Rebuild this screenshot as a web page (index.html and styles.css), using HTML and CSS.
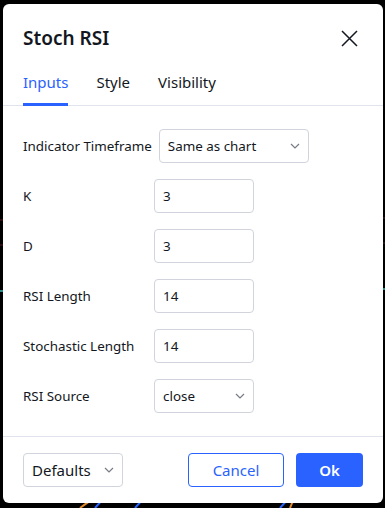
FILE: index.html
```html
<!DOCTYPE html>
<html lang="en">
<head>
<meta charset="UTF-8">
<meta name="viewport" content="width=device-width, initial-scale=1.0">
<title>Stoch RSI</title>
<link rel="stylesheet" href="styles.css">
</head>
<body>
<svg class="chart" width="385" height="508" viewBox="0 0 385 508">
    <path d="M0 220 L385 218" stroke="#5a1a24" stroke-width="1" fill="none"/>
    <path d="M0 245 L385 243" stroke="#5a1a24" stroke-width="1" fill="none"/>
    <path d="M0 291 L385 289" stroke="#2a8c86" stroke-width="2" fill="none"/>
    <path d="M80 508 Q90 500 100 495" stroke="#e08a2a" stroke-width="2" fill="none"/>
    <path d="M95 508 Q100 502 105 498" stroke="#2962ff" stroke-width="2" fill="none"/>
    <path d="M135 508 Q140 502 145 498" stroke="#2962ff" stroke-width="2" fill="none"/>
    <path d="M280 508 Q285 502 290 498" stroke="#2962ff" stroke-width="2" fill="none"/>
    <path d="M290 508 Q292 503 294 499" stroke="#e08a2a" stroke-width="2" fill="none"/>
</svg>

<div class="dialog">
    <div class="header">
        <h2 class="title">Stoch RSI</h2>
        <svg class="close" width="17" height="17" viewBox="0 0 17 17">
            <path d="M1 1 L16 16 M16 1 L1 16" stroke="#131722" stroke-width="1.5" fill="none"/>
        </svg>
    </div>

    <div class="tabs">
        <span class="tab active">Inputs</span>
        <span class="tab">Style</span>
        <span class="tab">Visibility</span>
    </div>

    <div class="content">
        <div class="row">
            <label>Indicator Timeframe</label>
            <div class="field select wide">
                <span>Same as chart</span>
                <svg width="10" height="6" viewBox="0 0 10 6"><path d="M1 1 L5 5 L9 1" stroke="#787b86" stroke-width="1.2" fill="none"/></svg>
            </div>
        </div>
        <div class="row">
            <label>K</label>
            <div class="field">3</div>
        </div>
        <div class="row">
            <label>D</label>
            <div class="field">3</div>
        </div>
        <div class="row">
            <label>RSI Length</label>
            <div class="field">14</div>
        </div>
        <div class="row">
            <label>Stochastic Length</label>
            <div class="field">14</div>
        </div>
        <div class="row">
            <label>RSI Source</label>
            <div class="field select">
                <span>close</span>
                <svg width="10" height="6" viewBox="0 0 10 6"><path d="M1 1 L5 5 L9 1" stroke="#787b86" stroke-width="1.2" fill="none"/></svg>
            </div>
        </div>
    </div>

    <div class="footer">
        <div class="field select defaults">
            <span>Defaults</span>
            <svg width="10" height="6" viewBox="0 0 10 6"><path d="M1 1 L5 5 L9 1" stroke="#787b86" stroke-width="1.2" fill="none"/></svg>
        </div>
        <div class="buttons">
            <button class="btn cancel">Cancel</button>
            <button class="btn ok">Ok</button>
        </div>
    </div>
</div>
</body>
</html>
```

FILE: styles.css
```css
html, body {
    margin: 0;
    height: 100%;
}
body {
    background: #000;
    font-family: "Noto Sans", sans-serif;
    color: #131722;
    padding: 4px 2px 5px 3px;
    box-sizing: border-box;
    position: relative;
}
.chart {
    position: absolute;
    left: 0;
    top: 0;
}
.dialog {
    position: relative;
    background: #fff;
    border-radius: 6px;
    height: 100%;
    display: flex;
    flex-direction: column;
}
.header {
    display: flex;
    align-items: center;
    justify-content: space-between;
    padding: 0 25px 0 20px;
    height: 68px;
}
.title {
    margin: 0;
    font-size: 19px;
    font-weight: 600;
}
.close {
    display: block;
}
.tabs {
    display: flex;
    gap: 28px;
    padding: 0 20px;
    border-bottom: 1px solid #e0e3eb;
}
.tab {
    font-size: 15px;
    padding: 0 0 11px;
    border-bottom: 3px solid transparent;
    margin-bottom: -1px;
}
.tab.active {
    color: #2962ff;
    border-bottom-color: #2962ff;
}
.content {
    flex: 1;
    padding: 23px 20px 0;
    display: flex;
    flex-direction: column;
    gap: 16px;
}
.row {
    display: flex;
    align-items: center;
}
.row label {
    font-size: 13.4px;
    min-width: 124px;
    margin-right: 7px;
}
.field {
    box-sizing: border-box;
    width: 100px;
    height: 34px;
    border: 1px solid #d1d4dc;
    border-radius: 4px;
    padding: 0 8px;
    font-size: 13.4px;
    display: flex;
    align-items: center;
}
.select {
    justify-content: space-between;
}
.wide {
    width: 150px;
}
.footer {
    display: flex;
    justify-content: space-between;
    align-items: center;
    padding: 16px 20px;
    border-top: 1px solid #e0e3eb;
}
.defaults {
    font-size: 15px;
}
.buttons {
    display: flex;
    gap: 12px;
}
.btn {
    height: 34px;
    border-radius: 4px;
    font-family: inherit;
    font-size: 15px;
    cursor: pointer;
}
.cancel {
    width: 96px;
    background: #fff;
    color: #2962ff;
    border: 1px solid #2962ff;
}
.ok {
    width: 67px;
    background: #2962ff;
    color: #fff;
    border: none;
    font-weight: 600;
}
```
